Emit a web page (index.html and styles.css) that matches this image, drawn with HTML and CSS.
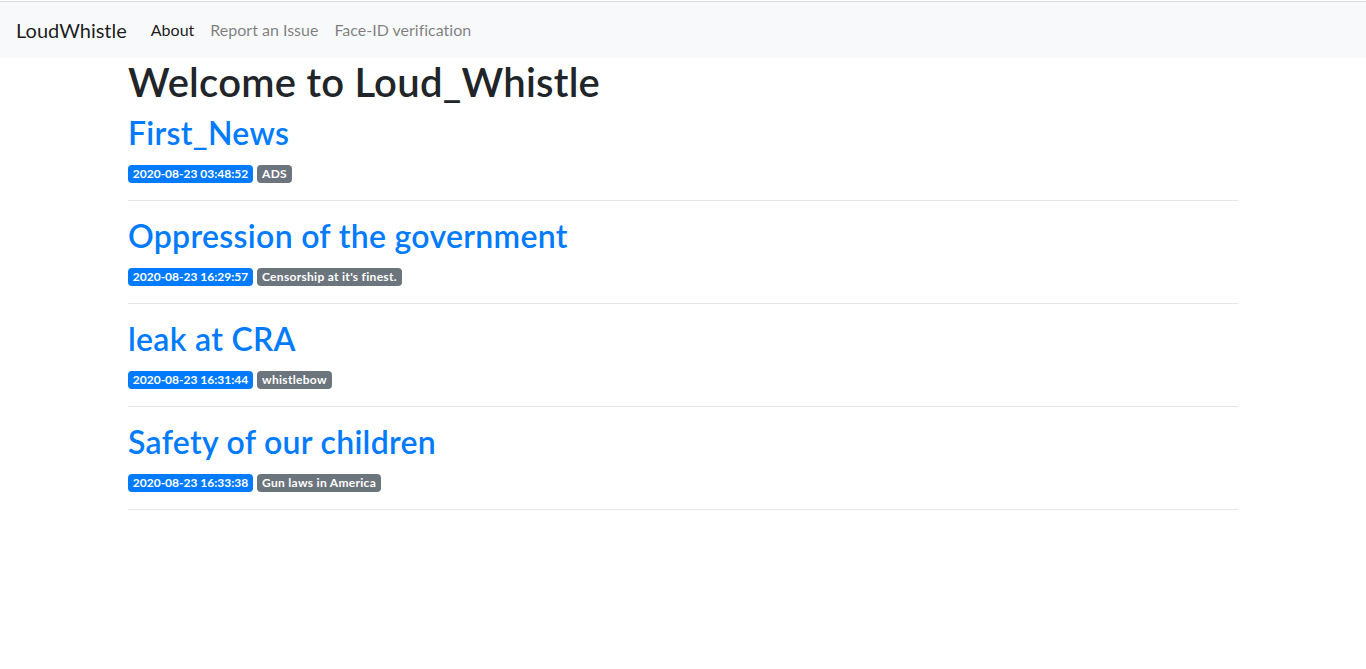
FILE: index.html
```html
<!DOCTYPE html>
<html lang="en">
<head>
<meta charset="utf-8">
<title>LoudWhistle</title>
<link rel="stylesheet" href="styles.css">
</head>
<body>
<nav class="navbar">
  <a class="brand" href="#">LoudWhistle</a>
  <ul class="nav">
    <li><a class="nav-link active" href="#">About</a></li>
    <li><a class="nav-link" href="#">Report an Issue</a></li>
    <li><a class="nav-link" href="#">Face-ID verification</a></li>
  </ul>
</nav>
<main class="container">
  <h1 class="title">Welcome to Loud_Whistle</h1>
  <article class="post">
    <h2 class="post-title"><a href="#">First_News</a></h2>
    <div class="badges"><span class="badge badge-primary">2020-08-23 03:48:52</span> <span class="badge badge-secondary">ADS</span></div>
  </article>
  <hr>
  <article class="post">
    <h2 class="post-title"><a href="#">Oppression of the government</a></h2>
    <div class="badges"><span class="badge badge-primary">2020-08-23 16:29:57</span> <span class="badge badge-secondary">Censorship at it's finest.</span></div>
  </article>
  <hr>
  <article class="post">
    <h2 class="post-title"><a href="#">leak at CRA</a></h2>
    <div class="badges"><span class="badge badge-primary">2020-08-23 16:31:44</span> <span class="badge badge-secondary">whistlebow</span></div>
  </article>
  <hr>
  <article class="post">
    <h2 class="post-title"><a href="#">Safety of our children</a></h2>
    <div class="badges"><span class="badge badge-primary">2020-08-23 16:33:38</span> <span class="badge badge-secondary">Gun laws in America</span></div>
  </article>
  <hr>
</main>
</body>
</html>
```
FILE: styles.css
```css
html, body {
  margin: 0;
  padding: 0;
}
body {
  font-family: Lato, "Liberation Sans", sans-serif;
  font-size: 16px;
  line-height: 1.5;
  color: #212529;
  background: #fff;
  padding-top: 1px;
  font-variant-ligatures: none;
}
a {
  text-decoration: none;
}
.navbar {
  display: flex;
  align-items: center;
  height: 57px;
  box-sizing: border-box;
  padding: 8px 16px;
  background: #f8f9fa;
  border-top: 1px solid #dcdcdc;
}
.brand {
  font-size: 20px;
  line-height: 30px;
  color: rgba(0, 0, 0, 0.9);
  margin-right: 16px;
  padding: 5px 0;
}
.nav {
  display: flex;
  list-style: none;
  margin: 0;
  padding: 0;
}
.nav-link {
  display: block;
  padding: 8px 8px;
  color: rgba(0, 0, 0, 0.5);
}
.nav-link.active {
  color: rgba(0, 0, 0, 0.9);
}
.container {
  max-width: 1110px;
  margin: 0 auto;
  padding: 0 15px;
}
.title {
  font-size: 40px;
  font-weight: 600;
  line-height: 48px;
  margin: 0 0 8px;
  letter-spacing: 0.25px;
}
.post-title {
  font-size: 32px;
  font-weight: 600;
  line-height: 38px;
  margin: 0 0 8px;
  letter-spacing: 0.3px;
}
.post-title a {
  color: #007bff;
}
.badges {
  line-height: 24px;
}
.badge {
  display: inline-block;
  padding: 3px 4.8px;
  font-size: 12px;
  font-weight: 700;
  line-height: 1;
  color: #fff;
  border-radius: 4px;
  white-space: nowrap;
  vertical-align: baseline;
}
.badge-primary {
  background: #007bff;
}
.badge-secondary {
  background: #6c757d;
  letter-spacing: 0.3px;
}
hr {
  margin: 16px 0;
  border: 0;
  border-top: 1px solid rgba(0, 0, 0, 0.1);
}
```
